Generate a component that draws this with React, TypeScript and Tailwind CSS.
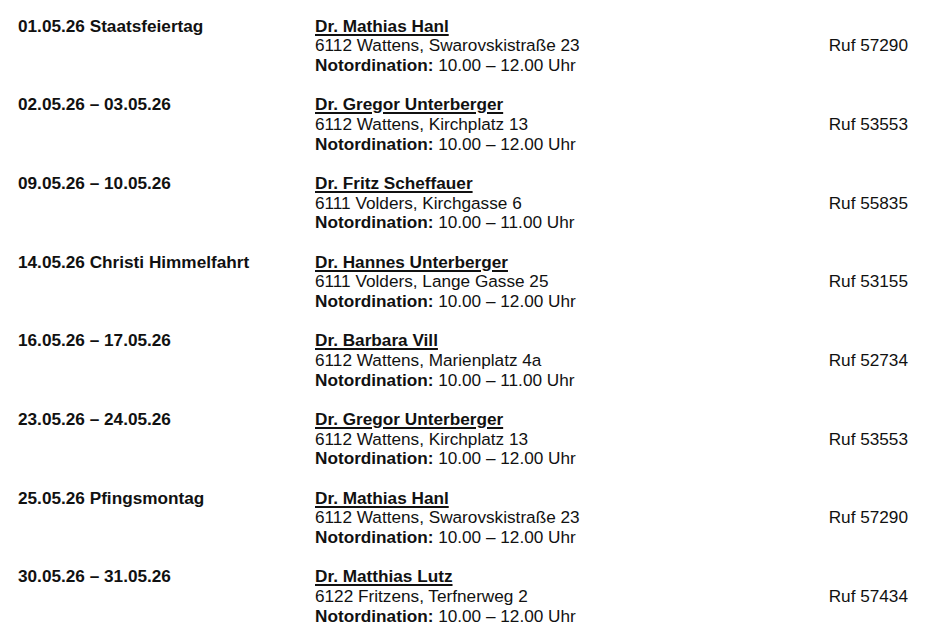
import React from 'react';

type Entry = {
  date: string;
  doctor: string;
  address: string;
  hours: string;
  phone: string;
};

const entries: Entry[] = [
  { date: '01.05.26 Staatsfeiertag', doctor: 'Dr. Mathias Hanl', address: '6112 Wattens, Swarovskistraße 23', hours: '10.00 – 12.00 Uhr', phone: 'Ruf 57290' },
  { date: '02.05.26 – 03.05.26', doctor: 'Dr. Gregor Unterberger', address: '6112 Wattens, Kirchplatz 13', hours: '10.00 – 12.00 Uhr', phone: 'Ruf 53553' },
  { date: '09.05.26 – 10.05.26', doctor: 'Dr. Fritz Scheffauer', address: '6111 Volders, Kirchgasse 6', hours: '10.00 – 11.00 Uhr', phone: 'Ruf 55835' },
  { date: '14.05.26 Christi Himmelfahrt', doctor: 'Dr. Hannes Unterberger', address: '6111 Volders, Lange Gasse 25', hours: '10.00 – 12.00 Uhr', phone: 'Ruf 53155' },
  { date: '16.05.26 – 17.05.26', doctor: 'Dr. Barbara Vill', address: '6112 Wattens, Marienplatz 4a', hours: '10.00 – 11.00 Uhr', phone: 'Ruf 52734' },
  { date: '23.05.26 – 24.05.26', doctor: 'Dr. Gregor Unterberger', address: '6112 Wattens, Kirchplatz 13', hours: '10.00 – 12.00 Uhr', phone: 'Ruf 53553' },
  { date: '25.05.26 Pfingsmontag', doctor: 'Dr. Mathias Hanl', address: '6112 Wattens, Swarovskistraße 23', hours: '10.00 – 12.00 Uhr', phone: 'Ruf 57290' },
  { date: '30.05.26 – 31.05.26', doctor: 'Dr. Matthias Lutz', address: '6122 Fritzens, Terfnerweg 2', hours: '10.00 – 12.00 Uhr', phone: 'Ruf 57434' },
];

export default function App() {
  return (
    <div className="w-[946px] h-[638px] overflow-hidden bg-white text-[#111] font-['Liberation_Sans',Arial,sans-serif] text-[17.2px] leading-[19.67px] pt-[16.5px] pl-[18px] pr-[38px]">
      {entries.map((e, i) => (
        <div key={i} className="flex pb-[19.67px]">
          <div className="w-[297px] font-bold">{e.date}</div>
          <div className="flex-1">
            <div className="font-bold underline decoration-[1.5px] underline-offset-[2px]">{e.doctor}</div>
            <div>{e.address}</div>
            <div>
              <span className="font-bold">Notordination:</span> {e.hours}
            </div>
          </div>
          <div className="pt-[19.67px] text-right">{e.phone}</div>
        </div>
      ))}
    </div>
  );
}
